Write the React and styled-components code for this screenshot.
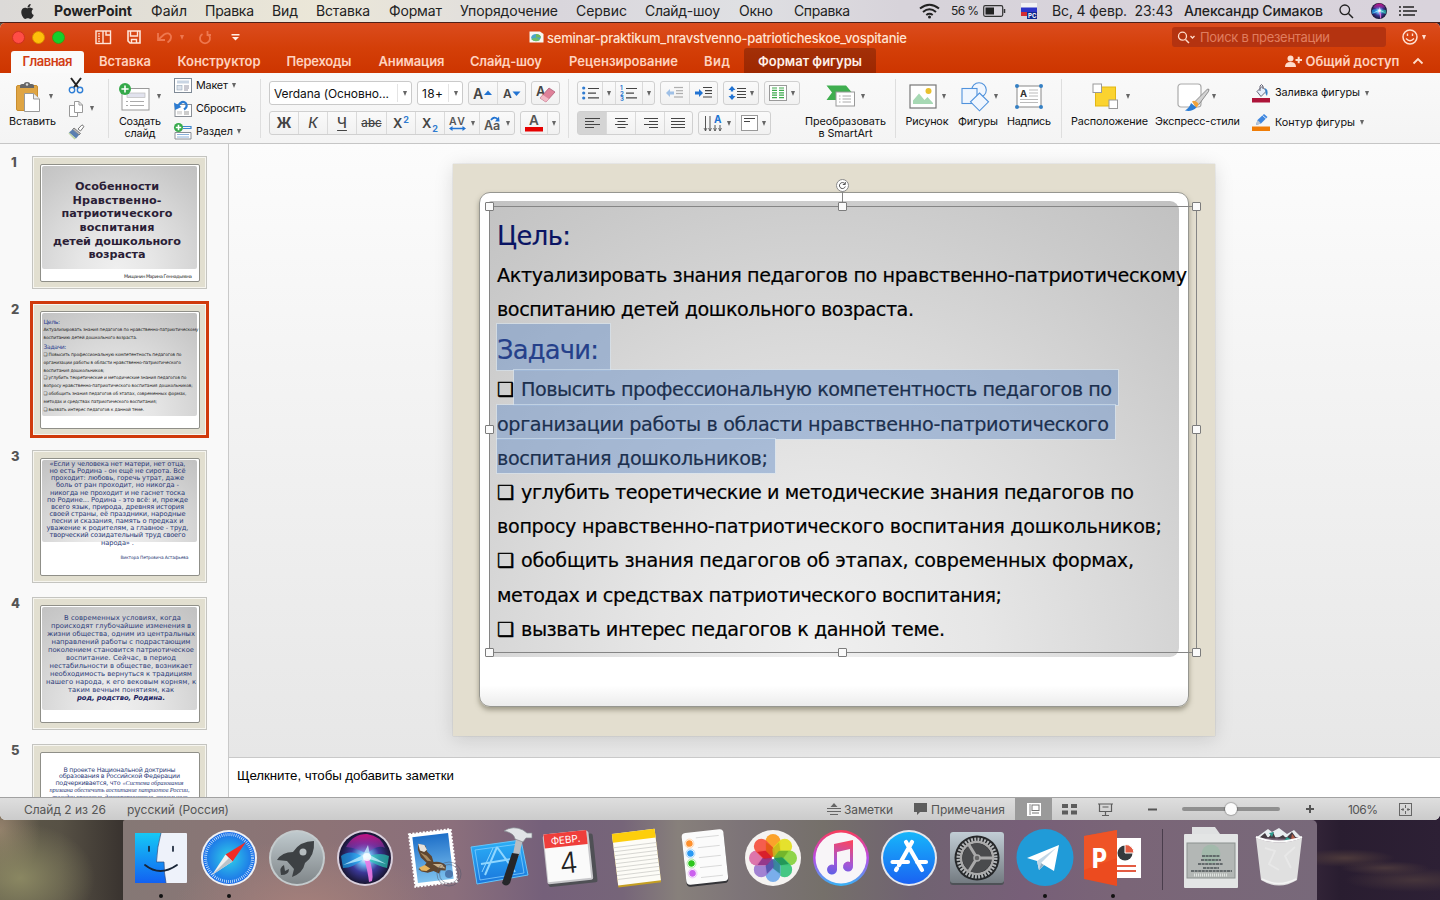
import React, { useLayoutEffect, useRef, useState } from "react";
import styled, { createGlobalStyle, css } from "styled-components";
import { FaApple } from "react-icons/fa";

const Global = createGlobalStyle`
  * { box-sizing: border-box; }
  body { margin: 0; overflow: hidden; font-family: Inter, "Liberation Sans", sans-serif; }
  svg { display: block; flex: none; overflow: visible; }
`;

/* ---------- text fitted to a given width by tracking ---------- */
const FitBox = styled.span`
  display: block;
  flex: none;
  width: ${(p) => p.$w}px;
  margin-left: ${(p) => p.$ml || 0}px;
  white-space: pre;
`;

function Fit({ w, ml, children, className }) {
  const ref = useRef(null);
  const [spacing, setSpacing] = useState(0);
  useLayoutEffect(() => {
    const el = ref.current;
    const count = el.textContent.length;
    el.style.letterSpacing = "0px";
    const natural = el.getBoundingClientRect().width;
    const next = (w - natural) / Math.max(1, count - 1);
    el.style.letterSpacing = `${next}px`;
    setSpacing(next);
  }, [w]);
  return (
    <FitBox className={className} $w={w} $ml={ml}>
      <span ref={ref} style={{ letterSpacing: spacing }}>{children}</span>
    </FitBox>
  );
}

/* ---------- page ---------- */
const Desktop = styled.div`
  width: 1440px;
  height: 900px;
  display: flex;
  flex-direction: column;
  overflow: hidden;
  background:
    radial-gradient(ellipse 75px 55px at 20px 878px, #8a8762 0, #7b785700 100%),
    radial-gradient(ellipse 40px 60px at 0 830px, #94816c 0, #94816c00 100%),
    radial-gradient(ellipse 50px 9px at 1345px 858px, #4d3a3b 0, #4d3a3b00 100%),
    radial-gradient(ellipse 45px 7px at 1385px 868px, #4a383c 0, #4a383c00 100%),
    radial-gradient(ellipse 70px 12px at 1415px 880px, #46353b 0, #46353b00 100%),
    linear-gradient(90deg, #5d5849 0, #575145 60px, #39332f 123px, #38283c 1300px, #291d30 1340px, #2d2035 1440px);
`;

const MenuBar = styled.header`
  height: 23px;
  flex: none;
  display: flex;
  align-items: center;
  border-bottom: 1px solid #4d2018;
  background: linear-gradient(90deg, #dcdad8 0, #e2dfd6 150px, #ebe7d8 320px, #e3e0dc 460px, #d9d6dc 560px, #dfe0e3 740px, #d7d3da 900px, #d9d3dc 1440px);
  color: #222;
  font-size: 14px;
  line-height: 22px;
`;
const MenuText = styled(Fit)`
  font-weight: ${(p) => p.$weight || 400};
  font-size: ${(p) => p.$size || 14}px;
`;
const Gap = styled.span`
  flex: none;
  width: ${(p) => p.$w}px;
`;

const Window = styled.main`
  height: 797px;
  flex: none;
  display: flex;
  flex-direction: column;
  overflow: hidden;
  border-radius: 5px 5px 6px 6px;
  background: #f7f7f7;
`;
const RedHead = styled.div`
  height: 50px;
  flex: none;
  display: flex;
  flex-direction: column;
  background: linear-gradient(#db4c1e 0, #d43f08 50%, #cd3500 100%);
`;
const TitleBar = styled.div`
  height: 25px;
  padding-top: 3px;
  display: flex;
  align-items: center;
`;
const Light = styled.span`
  width: 13px;
  height: 13px;
  margin-left: 7px;
  border-radius: 50%;
  background: ${(p) => p.$c};
  border: 1px solid ${(p) => p.$b};
`;
const TitleText = styled(Fit)`
  font-size: 13px;
  font-weight: 500;
  line-height: 18px;
  padding-top: 2px;
  color: #ffe3d2;
`;
const SearchField = styled.div`
  width: 214px;
  height: 20px;
  margin-left: 265px;
  padding-left: 5px;
  display: flex;
  align-items: center;
  border-radius: 3px;
  background: #b43310;
  color: #e07d5e;
  font-size: 13px;
`;
const Tabs = styled.nav`
  height: 25px;
  display: flex;
  align-items: flex-end;
  font-size: 13px;
  font-weight: 600;
  color: #ffd2bf;
`;
const Tab = styled.div`
  width: ${(p) => p.$w}px;
  height: ${(p) => (p.$kind === "context" ? 25 : 22)}px;
  padding-top: ${(p) => (p.$kind === "context" ? 3 : 0)}px;
  flex: none;
  display: flex;
  justify-content: center;
  line-height: 21px;
  border-radius: 3px 3px 0 0;
  ${(p) => p.$kind === "active" && css`background: #fafafa; color: #d23c14;`}
  ${(p) => p.$kind === "context" && css`background: linear-gradient(#a33008, #9d2700); color: #fff0e8;`}
`;

/* ---------- ribbon ---------- */
const Ribbon = styled.div`
  height: 71px;
  flex: none;
  display: flex;
  background: linear-gradient(#f9f9f9, #f4f4f4);
  border-bottom: 1px solid #c6c6c6;
  color: #111;
  font-size: 10.8px;
`;
const Group = styled.section`
  width: ${(p) => p.$w}px;
  padding: 6px 0 0 ${(p) => p.$pl || 0}px;
  flex: none;
  display: flex;
  position: relative;
  &:not(:last-child)::after {
    content: "";
    position: absolute;
    right: 0;
    top: 6px;
    height: 59px;
    border-right: 1px solid #dedede;
  }
`;
const BigButton = styled.div`
  width: ${(p) => p.$w}px;
  margin-left: ${(p) => p.$ml || 0}px;
  flex: none;
  display: flex;
  flex-direction: column;
  align-items: center;
`;
const BigTop = styled.div`
  height: 35px;
  padding-left: ${(p) => p.$pl || 0}px;
  align-self: flex-start;
  display: flex;
  align-items: center;
  gap: ${(p) => (p.$gap == null ? 5 : p.$gap)}px;
`;
const Label = styled(Fit)`
  line-height: 12px;
  padding-top: ${(p) => p.$pt || 0}px;
`;
const Column = styled.div`
  margin-left: ${(p) => p.$ml || 0}px;
  margin-top: ${(p) => p.$mt || 0}px;
  display: flex;
  flex-direction: column;
  flex: none;
  gap: ${(p) => p.$gap || 0}px;
`;
const SmallRow = styled.div`
  height: ${(p) => p.$h || 23}px;
  flex: none;
  display: flex;
  align-items: center;
  gap: ${(p) => (p.$gap == null ? 4 : p.$gap)}px;
`;
const CaretMark = styled.i`
  width: 0;
  height: 0;
  flex: none;
  border: 2.5px solid transparent;
  border-top: 5px solid ${(p) => p.$c || "#666"};
  border-bottom: 0;
`;
const ToolRow = styled.div`
  height: 24px;
  flex: none;
  display: flex;
  gap: 5px;
`;
const Field = styled.div`
  width: ${(p) => p.$w}px;
  height: 24px;
  display: flex;
  align-items: center;
  border: 1px solid #cacaca;
  border-radius: 3px;
  background: #fff;
  padding-left: 4px;
  font-size: 12px;
`;
const FieldCaret = styled.span`
  margin-left: auto;
  width: 14px;
  height: 18px;
  border-left: 1px solid #e4e4e4;
  display: flex;
  align-items: center;
  justify-content: center;
`;
const Segments = styled.div`
  height: 24px;
  display: flex;
  border: 1px solid #d0d0d0;
  border-radius: 3px;
  background: linear-gradient(#fafafa, #f1f1f1);
`;
const Seg = styled.div`
  width: ${(p) => p.$w}px;
  display: flex;
  align-items: center;
  justify-content: center;
  gap: 4px;
  color: #444;
  font-size: 14px;
  background: ${(p) => (p.$on ? "#d4d4d4" : "transparent")};
  & + & { border-left: 1px solid #dadada; }
`;
const Glyph = styled.span`
  font-size: ${(p) => p.$s || 14}px;
  font-weight: ${(p) => p.$b || 500};
  font-style: ${(p) => (p.$i ? "italic" : "normal")};
  text-decoration: ${(p) => p.$d || "none"};
  text-underline-offset: 2px;
  line-height: 18px;
  sup, sub { font-size: 9px; line-height: 0; color: #2f7bd0; font-weight: 700; margin-left: 1px; }
`;

/* ---------- slide list ---------- */
const Work = styled.div`
  height: 653px;
  flex: none;
  display: flex;
`;
const SlideList = styled.aside`
  width: 229px;
  padding: 12px 0 0 11px;
  overflow: hidden;
  display: flex;
  flex-direction: column;
  gap: 14px;
  border-right: 1px solid #c9c9c9;
  background: #f9f9f9;
`;
const SlideItem = styled.div`
  height: 133px;
  flex: none;
  display: flex;
`;
const SlideNumber = styled.span`
  width: 21px;
  font-size: 13px;
  line-height: 13px;
  font-weight: 800;
  color: #555;
`;
const Thumb = styled.div`
  width: 175px;
  height: 133px;
  padding: 7px 6px 6px 7px;
  border: 1px solid #c4c4c0;
  background: #e2dfd0;
  box-shadow: inset 0 0 0 1px #f6f5ef;
  ${(p) => p.$on && css`outline: 3px solid #d03a0c; outline-offset: -1px; border-color: #fff;`}
`;
const ThumbPaper = styled.div`
  width: 160px;
  height: 118px;
  padding: 1px;
  background: #fff;
  border: 1px solid #8f8f88;
  border-radius: 2px;
  overflow: hidden;
`;
const greyFill = css`
  background:
    radial-gradient(ellipse 68% 108% at 48% 100%, #efefef 0, #e6e6e6 35%, #d8d8d8 68%, #c9c9c9 100%, #bdbdbd 130%);
`;
const ThumbPanel = styled.div`
  width: 155px;
  height: ${(p) => p.$h}px;
  padding-top: ${(p) => p.$pt || 0}px;
  padding-right: ${(p) => p.$pr || 0}px;
  border-radius: 2px;
  display: flex;
  flex-direction: column;
  align-items: ${(p) => (p.$left ? "flex-start" : "center")};
  padding-left: ${(p) => (p.$left ? 1.5 : 0)}px;
  ${(p) => !p.$plain && greyFill}
`;
const ThumbLine = styled(Fit)`
  flex: none;
  height: ${(p) => p.$lh}px;
  line-height: ${(p) => p.$lh}px;
  font-family: ${(p) => (p.$serif ? '"Liberation Serif", serif' : '"DejaVu Sans", sans-serif')};
  font-size: ${(p) => p.$s}px;
  font-weight: ${(p) => (p.$b ? 700 : 400)};
  font-style: ${(p) => (p.$i ? "italic" : "normal")};
  color: ${(p) => p.$c || "#2b3a78"};
`;
const ThumbPair = styled.div`
  display: flex;
  gap: 2px;
`;
const Signature = styled.div`
  display: flex;
  justify-content: flex-end;
  padding-right: ${(p) => p.$r}px;
  padding-top: ${(p) => p.$t}px;
`;

/* ---------- editing area ---------- */
const Editor = styled.div`
  width: 1211px;
  display: flex;
  flex-direction: column;
`;
const Canvas = styled.div`
  height: 613px;
  padding: 20px 0 0 224px;
  background: linear-gradient(#fcfcfc, #f1f1f1 50%, #e7e7e7);
`;
const Slide = styled.div`
  position: relative;
  width: 762px;
  height: 572px;
  padding: 28px 26px;
  background: #e3decf;
  box-shadow: 0 3px 18px rgba(0, 0, 0, 0.13), 0 0 1px rgba(0, 0, 0, 0.25);
`;
const Paper = styled.div`
  width: 710px;
  height: 515px;
  padding: 8px 0 0 9px;
  border: 1px solid #969690;
  border-radius: 11px;
  background: linear-gradient(#fff 96%, #ececec 100%);
  box-shadow: 0 3px 5px rgba(90, 85, 65, 0.5);
`;
const Panel = styled.div`
  width: 690px;
  height: 456px;
  padding: 9px 0 0 8px;
  border-radius: 2px 9px 9px 2px;
  ${greyFill}
`;
const Line = styled.div`
  height: ${(p) => (p.$head ? 46 : 34.2)}px;
  display: flex;
  font-family: "DejaVu Sans", sans-serif;
  font-size: ${(p) => (p.$head ? 25.8 : 19.2)}px;
  line-height: ${(p) => (p.$head ? 53.5 : 40.2)}px;
  color: ${(p) => (p.$head ? "#0a1463" : "#000")};
  -webkit-text-stroke: 0.2px currentColor;
`;
const Bullet = styled.span`
  width: 17px;
  flex: none;
  color: #000;
  -webkit-text-stroke: 0.5px #000;
`;
const Run = styled.span`
  display: flex;
  height: 100%;
  padding: 0 6px 0 ${(p) => (p.$item ? 7 : 0)}px;
  ${(p) => p.$sel && css`
    padding-right: ${p.$pr || 6}px;
    background: rgba(97, 140, 200, 0.45);
    color: ${p.$head ? "#25408a" : "#1c304e"};
    box-shadow: 0 0 0 1px rgba(215, 228, 240, 0.6);
  `}
`;
const Frame = styled.div`
  position: absolute;
  left: 36px;
  top: 42px;
  width: 708px;
  height: 447px;
  border: 1px solid #858585;
`;
const Handle = styled.span`
  position: absolute;
  left: ${(p) => p.$x}px;
  top: ${(p) => p.$y}px;
  width: 9px;
  height: 9px;
  margin: -5px 0 0 -5px;
  border: 1px solid #7c7c7c;
  border-radius: 1px;
  background: #fafafa;
`;
const Rotator = styled.div`
  position: absolute;
  left: 345px;
  top: -29px;
`;
const Notes = styled.div`
  height: 40px;
  padding: 9px 0 0 8px;
  border-top: 1px solid #c9c9c9;
  background: #fff;
  font: 13.3px/18px "Liberation Sans", Arial, sans-serif;
  color: #000;
`;

/* ---------- status bar ---------- */
const StatusBar = styled.footer`
  height: 23px;
  flex: none;
  display: flex;
  align-items: center;
  border-top: 1px solid #a2a2a2;
  background: linear-gradient(#dedede, #cbcbcb);
  color: #555;
  font-size: 12px;
`;
const ViewButton = styled.div`
  width: 37px;
  height: 22px;
  margin-right: -1px;
  display: flex;
  align-items: center;
  justify-content: center;
  background: ${(p) => (p.$on ? "#9a9a9a" : "transparent")};
`;
const Track = styled.div`
  width: 98px;
  height: 4px;
  margin-left: 25px;
  border-radius: 2px;
  background: #8f8f8f;
  display: flex;
  align-items: center;
  justify-content: center;
`;
const Knob = styled.span`
  width: 12px;
  height: 12px;
  border-radius: 50%;
  background: #fcfcfc;
  box-shadow: 0 0 1px 1px rgba(0, 0, 0, 0.2);
`;

/* ---------- dock ---------- */
const Dock = styled.div`
  width: 1194px;
  height: 80px;
  margin-left: 123px;
  padding: 0 4px;
  display: flex;
  border-radius: 2px 5px 0 0;
  background:
    radial-gradient(ellipse 130px 70px at 180px 90px, #a5807b 0, #a5807b00 100%),
    linear-gradient(90deg, #857875 0, #8d7376 200px, #8b6f7c 330px, #75607a 420px, #766579 500px, #87807b 555px, #7d7478 620px, #75706a 700px, #706371 790px, #775f78 900px, #7a6577 1000px, #78697a 1194px);
`;
const Divider = styled.span`
  width: 30px;
  flex: none;
  display: flex;
  justify-content: center;
  &::before { content: ""; width: 1px; height: 61px; margin-top: 9px; background: #4a3d4c; }
`;

/* ---------- drawings ---------- */
const I = ({ w, h, vb, children }) => (
  <svg width={w} height={h} viewBox={vb || `0 0 ${w} ${h}`} fill="none">{children}</svg>
);
const Caret = ({ c }) => <CaretMark $c={c} />;

const PasteIcon = () => (
  <I w={24} h={30}>
    <rect x="0.5" y="3.5" width="21" height="25" rx="1.5" fill="#dfa544" stroke="#c98d2e" />
    <path d="M4 6V3.5Q4 2 6 2H8Q8 0 11 0T14 2H16Q18 2 18 3.5V6Z" fill="#666" />
    <circle cx="11" cy="2.5" r="1.2" fill="#ddd" />
    <path d="M8.500 11.500H17.500L23.500 17V29.500H8.500Z" fill="#fff" stroke="#999" />
    <path d="M17.500 11.500V17H23.500" fill="#eee" stroke="#999" />
  </I>
);
const CutIcon = () => (
  <I w={16} h={17}>
    <path d="M3 1L10.500 11M13 1L5.500 11" stroke="#222" strokeWidth="2" />
    <circle cx="4" cy="13" r="2.700" stroke="#2f7fd6" strokeWidth="1.400" />
    <circle cx="12" cy="13" r="2.700" stroke="#2f7fd6" strokeWidth="1.400" />
  </I>
);
const CopyIcon = () => (
  <I w={16} h={16}>
    <path d="M1.500 4.500H6.500L9.500 7.500V15.500H1.500Z" fill="#fff" stroke="#999" />
    <path d="M6.500 .5H11L14.500 4V11.500H6.500Z" fill="#fff" stroke="#999" />
    <path d="M11 .5V4H14.500" stroke="#999" />
  </I>
);
const BrushIcon = () => (
  <I w={17} h={16}>
    <path d="M10 5L14 .8L16 2.500L12.500 7Z" fill="#fff" stroke="#777" />
    <path d="M6 4L12.500 9.500L11 11L4.500 5.500Z" fill="#bbb" stroke="#666" strokeWidth=".8" />
    <path d="M4.500 5.500L11 11L8 14.500L1 8.500Z" fill="#5b7fb0" />
    <path d="M1 8.500L8 14.500L6.500 15.500L.5 9.500Z" fill="#bcd3a0" />
  </I>
);
const Plus = ({ x, y, r }) => (
  <g>
    <circle cx={x} cy={y} r={r} fill="#35a94a" />
    <path d={`M${x - r * 0.6} ${y}h${r * 1.2}M${x} ${y - r * 0.6}v${r * 1.2}`} stroke="#fff" strokeWidth="1.600" />
  </g>
);
const NewSlideIcon = () => (
  <I w={31} h={28}>
    <rect x="3" y="5.500" width="27" height="21.500" fill="#fff" stroke="#999" />
    <rect x="8" y="10" width="18" height="4.500" fill="#e2e3ee" stroke="#bbb" strokeWidth=".7" />
    <path d="M7 18.500H9M11 18.500H25M7 22.500H9M11 22.500H25" stroke="#aaa" />
    <Plus x={6} y={6} r={6} />
  </I>
);
const LayoutIcon = () => (
  <I w={18} h={15}>
    <rect x=".5" y=".5" width="17" height="14" fill="#fff" stroke="#7f8a96" />
    <rect x="3" y="2.500" width="12" height="3" fill="#c9d5e3" />
    <rect x="3" y="7.500" width="5" height="4.500" fill="#dce3ec" stroke="#9ab" strokeWidth=".6" />
    <path d="M10 8H15M10 10H15M10 12H14" stroke="#889" strokeWidth=".9" />
  </I>
);
const ResetIcon = () => (
  <I w={18} h={17}>
    <rect x="1" y="4.500" width="16.500" height="12" fill="#fff" stroke="#8a8f96" />
    <rect x="3" y="11" width="5" height="3.500" fill="#ddd" />
    <path d="M10 12H15M10 14H15" stroke="#999" />
    <path d="M3.500 7Q8 -1 12 3.500Q14 7 10 9.500" stroke="#2b7cd3" strokeWidth="2.200" />
    <path d="M0 2.500L1 10L7.500 7Z" fill="#2b7cd3" />
  </I>
);
const SectionIcon = () => (
  <I w={18} h={17}>
    <path d="M7 3.500H17V5.500H9" fill="none" stroke="#3f86cf" strokeWidth="1.200" />
    <path d="M1 9.500H17V16H1Z" fill="#fff" stroke="#8a8f96" />
    <path d="M3 11.500H15M3 14H15" stroke="#8ab0da" />
    <Plus x={4.500} y={4.500} r={4.500} />
  </I>
);
const Rows = ({ x = 0, y = 0, ws, gap = 4, c = "#444", right, mid }) => (
  <g stroke={c} strokeWidth="1.200">
    {ws.map((w, i) => {
      const off = right ? right - w : mid ? (mid - w) / 2 : 0;
      return <path key={i} d={`M${x + off} ${y + i * gap + 0.5}h${w}`} />;
    })}
  </g>
);
const BulletListIcon = () => (
  <I w={17} h={14}>
    <g fill="#2f7bd0"><circle cx="1.700" cy="2" r="1.600" /><circle cx="1.700" cy="7" r="1.600" /><circle cx="1.700" cy="12" r="1.600" /></g>
    <Rows x={6} y={2} gap={4.700} ws={[11, 8, 11]} />
  </I>
);
const NumberListIcon = () => (
  <I w={18} h={16}>
    <g fill="#2f7bd0" fontSize="6" fontWeight="700" fontFamily="Inter, sans-serif"><text x="0" y="5">1</text><text x="0" y="10.500">2</text><text x="0" y="16">3</text></g>
    <Rows x={6} y={3} gap={4.700} ws={[11, 8, 11]} />
  </I>
);
const IndentIcon = ({ out }) => (
  <g opacity={out ? 0.4 : 1}>
    <path d={out ? "M0 6L4 2V4.500H8V7.500H4V10Z" : "M8 6L4 2V4.500H0V7.500H4V10Z"} fill="#2173d2" />
    <Rows x={8} y={0} gap={2.700} ws={[9]} />
    <Rows x={10} y={3.200} gap={2.800} ws={[7, 7]} />
    <Rows x={8} y={9.500} ws={[9]} />
  </g>
);
const SpacingIcon = () => (
  <I w={18} h={14}>
    <path d="M4 0L7.500 4H5.200V5.500H2.800V4H.5ZM4 14L7.500 10H5.200V8.500H2.800V10H.5Z" fill="#2173d2" />
    <Rows x={9} y={2} gap={3} ws={[9, 9, 9, 9]} />
  </I>
);
const ColumnsIcon = () => (
  <I w={18} h={16}>
    <rect x=".5" y=".5" width="17" height="15" fill="#fff" stroke="#999" />
    <Rows x={3} y={2.500} gap={2.400} ws={[5, 5, 5, 5, 5]} c="#3caa4c" />
    <Rows x={10} y={2.500} gap={2.400} ws={[5, 5, 5, 5, 5]} c="#3caa4c" />
  </I>
);
const SmartArtIcon = () => (
  <I w={30} h={23}>
    <path d="M.5 .5H20L25.500 7L20 15H.5L6 7.500Z" fill="#3fae4f" />
    <rect x="10" y="7" width="18.500" height="14" fill="#fff" stroke="#999" />
    <path d="M13 11H14.500M16.500 11H25M13 14H14.500M16.500 14H25M13 17H14.500M16.500 17H25" stroke="#aaa" />
  </I>
);
const PictureIcon = () => (
  <I w={28} h={25}>
    <rect x="1" y="1" width="26" height="23" fill="#fff" stroke="#777" strokeWidth="1.200" />
    <path d="M4 20V16.500L10 9.500L15.500 16L18.500 13L24 19V20Z" fill="#a7d9b4" />
    <circle cx="19.500" cy="7" r="3" fill="#e9c02e" />
  </I>
);
const ShapesIcon = () => (
  <I w={28} h={30}>
    <g fill="#f0f6fe" stroke="#5193dc" strokeWidth="1.100">
      <circle cx="18" cy="8" r="7.300" /><rect x="1" y="6.500" width="15" height="15" /><path d="M18.500 11L27.500 19.800L18.500 28.800L9.500 19.800Z" />
    </g>
  </I>
);
const TextBoxIcon = () => (
  <I w={28} h={25}>
    <rect x="2" y="2" width="24" height="21" fill="#fff" stroke="#888" />
    <g fill="#3480c4"><circle cx="2" cy="2" r="2" /><circle cx="26" cy="2" r="2" /><circle cx="2" cy="23" r="2" /><circle cx="26" cy="23" r="2" /></g>
    <text x="5" y="12.500" fontSize="9.500" fontWeight="700" fill="#333" fontFamily="Inter, sans-serif">A</text>
    <path d="M14 6H23M14 9H23M14 12H23M5 15.500H23M5 18.500H23" stroke="#bbb" />
  </I>
);
const ArrangeIcon = () => (
  <I w={27} h={27}>
    <rect x="3.500" y="4" width="20" height="19" fill="#fbd32f" stroke="#e2b714" />
    <rect x="1" y="1" width="8.500" height="8.500" fill="#fff" stroke="#999" /><rect x="17" y="17" width="8.500" height="8.500" fill="#fff" stroke="#999" />
  </I>
);
const StylesIcon = () => (
  <I w={33} h={28}>
    <rect x="1" y="1" width="23" height="23" rx="3" fill="#fff" stroke="#aaa" strokeWidth="1.200" />
    <path d="M30.500 6Q33 5.500 31.500 8.500L21.500 22L17.500 19Z" fill="#d2d2d2" stroke="#777" strokeWidth=".8" />
    <path d="M15 18.500Q18 16.500 21.500 20.500Q21.500 23 19 25Z" fill="#f0a33c" />
    <path d="M8 27.500Q12.500 25 14 20L19.500 24.500Q15 29 8 27.500Z" fill="#2b7cd3" />
  </I>
);
const FillIcon = () => (
  <I w={18} h={19}>
    <path d="M5 7.500L10 2.500L14.500 7L9 12.500Z" fill="#e5eefa" stroke="#667" />
    <path d="M8 7V2Q9.500 -1 11 2V5" stroke="#667" />
    <path d="M12.500 4Q17 5 15 12Q13 10 13.500 7Z" fill="#3480c9" />
    <rect x="0" y="14" width="18" height="4.500" fill="#ad1439" />
  </I>
);
const OutlineIcon = () => (
  <I w={18} h={19}>
    <path d="M4 12L5.500 7L12 1L15.500 4L9 10.500Z" fill="#3e86df" /><path d="M4 12L5.500 7L9 10.500Z" fill="#b8c5d6" />
    <path d="M10.500 2.500L14 5.500" stroke="#fff" strokeWidth=".8" />
    <rect x="0" y="13.500" width="18" height="4.500" fill="#ef7d08" />
  </I>
);

const SiriDisc = ({ id, x, y, r }) => (
  <g>
    <defs>
      <radialGradient id={id} cx=".5" cy=".5" r=".52">
        <stop offset="0" stopColor="#fff" /><stop offset=".25" stopColor="#6fb6f0" /><stop offset=".55" stopColor="#3a3796" /><stop offset="1" stopColor="#151228" />
      </radialGradient>
      <linearGradient id={`${id}Top`} x2="0" y2="1"><stop stopColor="#d8108a" /><stop offset="1" stopColor="#7b3fb8" stopOpacity=".4" /></linearGradient>
    </defs>
    <circle cx={x} cy={y} r={r} fill={`url(#${id})`} />
    <g transform={`translate(${x} ${y}) scale(${r / 26})`}>
      <path d="M-19 -11Q-12 -24 2 -24Q16 -22 20 -10Q12 -14 2 -4Q-8 -10 -19 -11Z" fill={`url(#${id}Top)`} opacity=".9" />
      <path d="M-24 -2Q-14 -10 0 0Q-12 10 -22 10Z" fill="#17a8ee" opacity=".65" />
      <path d="M24 -2Q14 -7 0 0Q12 8 22 10Z" fill="#28cfb4" opacity=".65" />
      <path d="M-1 0L4 0Q9 15 7 23L4 24Q3 14 -1 0Z" fill="#ee7ae6" opacity=".9" />
      <path d="M-22 7L-2 -3L3 -13L5 -3L21 6L4 1L-2 2Z" fill="#c9f4ff" opacity=".75" />
      <circle cx="2" cy="-1" r="4" fill="#fff" opacity=".8" />
    </g>
  </g>
);

const Slot = ({ run, children }) => (
  <I w={68} h={80}>
    {children}
    {run && <circle cx="34" cy="76" r="2" fill="#111" />}
  </I>
);
const range = (n) => Array.from({ length: n }, (_, i) => i);

const Finder = () => (
  <Slot run>
    <defs><linearGradient id="fl" x2="0" y2="1"><stop stopColor="#15c9f5" /><stop offset="1" stopColor="#1261f2" /></linearGradient></defs>
    <rect x="8" y="13" width="52" height="50" rx="1" fill="#eef2fa" />
    <path d="M8 13H34Q30 27 29.500 42H37Q37 53 39 63H8Z" fill="url(#fl)" />
    <path d="M34 13Q30 27 29.500 42H37Q37 53 39 63" stroke="#2d4a80" strokeWidth=".7" />
    <path d="M22 26.500V31M46 26.500V31" stroke="#172436" strokeWidth="1.700" strokeLinecap="round" />
    <path d="M18 45Q33 57 50 45" stroke="#172436" strokeWidth="1.800" strokeLinecap="round" />
  </Slot>
);
const Safari = () => (
  <Slot run>
    <defs><radialGradient id="sf"><stop stopColor="#2fd0e8" /><stop offset="1" stopColor="#1b6ce8" /></radialGradient></defs>
    <circle cx="34" cy="38" r="28" fill="#f0f1f4" /><circle cx="34" cy="38" r="26" fill="url(#sf)" />
    <circle cx="34" cy="38" r="23.500" stroke="#d9efff" strokeWidth="3" strokeDasharray=".7 1.350" />
    <path d="M51 22L37.500 41.500L30.500 34.500Z" fill="#f02c26" /><path d="M17 55L30.500 34.500L37.500 41.500Z" fill="#f0f0f0" /><path d="M17 55L34 38L37.500 41.500Z" fill="#bbc2c8" />
  </Slot>
);
const Launchpad = () => (
  <Slot>
    <defs><linearGradient id="lp" x2="0" y2="1"><stop stopColor="#bfc9cd" /><stop offset="1" stopColor="#808689" /></linearGradient></defs>
    <circle cx="34" cy="38" r="28" fill="#c4cbcd" /><circle cx="34" cy="38" r="26" fill="url(#lp)" />
    <path d="M51 21Q37 21 30 32Q19 32 14 40L24 41L31 49L29 57Q40 53 42 43Q52 36 51 21Z" fill="#3d4144" />
    <circle cx="40" cy="32" r="3.500" fill="#b5bcbf" /><path d="M21 45Q16 47 18 55Q26 55 26 49L22 51Z" fill="#3d4144" />
  </Slot>
);
const Siri = () => (<Slot><circle cx="34" cy="38" r="28" fill="#d9cfdc" /><SiriDisc id="siriDock" x={34} y={38} r={26} /></Slot>);
const Mail = () => (
  <Slot>
    <defs><linearGradient id="ml" x2="0" y2="1"><stop stopColor="#1e6fc8" /><stop offset="1" stopColor="#7ec2ef" /></linearGradient></defs>
    <g transform="rotate(-7 34 38)">
      <rect x="13" y="11.500" width="42" height="53" fill="#fff" stroke="#fff" strokeWidth="2" strokeDasharray="2 1.500" />
      <rect x="16" y="15" width="36" height="46" fill="url(#ml)" />
      <path d="M21 22L28 25L29 31L33 36L34 42Q42 42 46 47L45 52L40 51L38 54L33 51L27 52L21 50L18 47L24 45L27 42L22 36L20 28Z" fill="#5f4630" />
      <path d="M21 22L27 24L29 29L26 31L22 29Z" fill="#e8e2da" />
      <path d="M22 31L28 35L32 41L28 40Z" fill="#a98a60" />
      <path d="M19 46L25 44L30 48L26 50L21 49Z" fill="#e7b45e" />
      <path d="M33 44L42 45L45 50L38 48Z" fill="#c9b18c" />
    </g>
    <g stroke="#4c5669" strokeWidth=".8" opacity=".6"><circle cx="50" cy="54" r="12" /><circle cx="50" cy="54" r="9.500" /></g>
    <circle cx="50" cy="54" r="4" fill="#3a5d94" opacity=".7" />
  </Slot>
);
const Xcode = () => (
  <Slot>
    <defs><linearGradient id="xc" x2="0" y2="1"><stop stopColor="#2bb0f7" /><stop offset="1" stopColor="#1a76dc" /></linearGradient></defs>
    <path d="M4 27L54 20L61 55L10 64Z" fill="url(#xc)" stroke="#64c4fa" />
    <path d="M8 30L52 24L57 53L13 60Z" stroke="#8fd4ff" strokeWidth=".7" />
    <g stroke="#8fd6ff" strokeWidth="2"><path d="M30 27L18 55M30 27L48 52M14 44L50 38" /><path d="M26 28L15 52" strokeWidth="1" /></g>
    <path d="M46 34L50 14L57 15L52 36Z" fill="#b9bdc2" /><path d="M45 33L52 34L43 63Q39 68 35 63Z" fill="#25262a" />
    <path d="M37 11Q46 5 56 10L60 13L65 13L65 18L59 18L56 22L48 19Q47 13 37 11Z" fill="#e1e4e7" stroke="#83888e" strokeWidth=".7" />
  </Slot>
);
const Calendar = () => (
  <Slot>
    <g transform="rotate(-6 34 38)">
      <rect x="11" y="16" width="49" height="49" rx="2" fill="#4f5055" /><rect x="10" y="13" width="46" height="49" rx="2" fill="#c7c7ca" /><rect x="11" y="12" width="43" height="48" fill="#fafafa" /><rect x="11" y="12" width="43" height="14" fill="#ef3e3b" />
      <text x="32.500" y="23" textAnchor="middle" fontSize="10" fontFamily="Inter, sans-serif" fill="#fff">ФЕВР.</text>
      <text x="33" y="53" textAnchor="middle" fontSize="29" fontWeight="300" fontFamily="Inter, sans-serif" fill="#222">4</text>
    </g>
  </Slot>
);
const NotesApp = () => (
  <Slot>
    <g transform="rotate(-7 34 38)">
      <rect x="12" y="13" width="43" height="52" fill="#c59f22" /><rect x="12" y="11" width="43" height="52" fill="#fdfcf7" /><rect x="12" y="11" width="43" height="9" fill="#fdce0c" />
      {range(9).map((i) => <path key={i} d={`M12 ${25 + i * 4}H55`} stroke="#c8c8c4" strokeWidth=".7" />)}
    </g>
  </Slot>
);
const Reminders = () => (
  <Slot>
    <g transform="rotate(-6 34 38)">
      <rect x="13" y="13" width="42" height="52" rx="4" fill="#343438" /><rect x="13" y="11" width="42" height="52" rx="4" fill="#fbfbfb" />
      {["#ff902c", "#2899f4", "#2cc61d", "#cb61ee"].map((c, i) => (
        <g key={c}><circle cx="20" cy={22 + i * 10} r="3.800" fill={c} stroke="#fff" /><circle cx="20" cy={22 + i * 10} r="4.500" stroke={c} strokeWidth=".5" opacity=".6" /><path d={`M28 ${27 + i * 10}H50`} stroke="#ccc" strokeWidth=".7" /></g>
      ))}
      <path d="M27 17H50" stroke="#ccc" strokeWidth=".7" />
    </g>
  </Slot>
);
const PETALS = [
  ["#fb9b1a", "#e0580f"], ["#e3e01c", "#c6b61b"], ["#86d13c", "#6faf2a"], ["#35c37a", "#1f8f53"],
  ["#6fa8ea", "#2f7f93"], ["#9a78cf", "#4a4fa8"], ["#da6aa5", "#8a2f86"], ["#f4503f", "#d41828"],
];
const Photos = () => (
  <Slot>
    <circle cx="34" cy="38" r="28" fill="#f5f3f1" />
    {PETALS.map(([c], i) => (
      <rect key={c} x="26.500" y="14" width="15" height="24" rx="7.500" fill={c} opacity=".92" transform={`rotate(${i * 45} 34 38)`} />
    ))}
    {PETALS.map(([, c], i) => (
      <path key={c} d="M34 38L26.500 32V21.500L34 27Z" fill={c} opacity=".85" transform={`rotate(${i * 45} 34 38) translate(3 3) scale(.91)`} />
    ))}
    <circle cx="34" cy="38" r="1.300" fill="#fff" />
  </Slot>
);
const Music = () => (
  <Slot>
    <defs>
      <linearGradient id="mr" x2="0" y2="1"><stop stopColor="#fb3c58" /><stop offset=".5" stopColor="#b84ae8" /><stop offset="1" stopColor="#35b5f5" /></linearGradient>
      <linearGradient id="mn" gradientUnits="userSpaceOnUse" x1="40" y1="20" x2="30" y2="58"><stop stopColor="#fb445f" /><stop offset=".6" stopColor="#a357d7" /><stop offset="1" stopColor="#5461e9" /></linearGradient>
    </defs>
    <circle cx="34" cy="38" r="28" fill="url(#mr)" /><circle cx="34" cy="38" r="25.500" fill="#f8f5f8" />
    <path d="M27 24L46 20V46A5 5 0 1 1 43 42V29L30 32V50A5 5 0 1 1 27 45Z" fill="url(#mn)" />
  </Slot>
);
const Store = () => (
  <Slot>
    <defs><linearGradient id="as" x2="0" y2="1"><stop stopColor="#17b6fa" /><stop offset="1" stopColor="#1a62f2" /></linearGradient></defs>
    <circle cx="34" cy="38" r="28" fill="#e6e8ed" /><circle cx="34" cy="38" r="26" fill="url(#as)" />
    <g stroke="#fff" strokeWidth="4.200" strokeLinecap="round"><path d="M37 22L24 45M31 22L47 50M17.500 42H33M42 42H51M21 50L22 48.500" /></g>
  </Slot>
);
const Settings = () => (
  <Slot>
    <defs><linearGradient id="st" x2="0" y2="1"><stop stopColor="#c1cdd5" /><stop offset="1" stopColor="#747b81" /></linearGradient></defs>
    <rect x="7" y="12" width="54" height="53" rx="3" fill="#4d5156" /><rect x="7" y="12" width="54" height="51" rx="3" fill="url(#st)" />
    <circle cx="34" cy="38" r="22.500" fill="#26282a" /><circle cx="34" cy="38" r="18.500" stroke="#b4b7b9" strokeWidth="4" strokeDasharray="1.900 1.327" />
    <circle cx="34" cy="38" r="16" stroke="#aaa" strokeWidth="2.500" /><circle cx="34" cy="38" r="14.500" fill="#4a4b4d" />
    <path d="M34 38L26 25M34 38H49M34 38L26 51" stroke="#aaa" strokeWidth="3" /><circle cx="34" cy="38" r="3" fill="#666" stroke="#aaa" strokeWidth="1.500" />
  </Slot>
);
const Telegram = () => (
  <Slot run>
    <circle cx="34" cy="37.500" r="28.500" fill="#209bd8" />
    <path d="M16 38L48 25L43 51L33 45L28 50L26 41Z" fill="#fff" /><path d="M26 41L45 28L30 43L28 50Z" fill="#c3d6e5" /><path d="M30 43L28 50L33 45Z" fill="#93afc4" />
  </Slot>
);
const PowerPoint = () => (
  <Slot run>
    <rect x="34" y="18" width="28" height="40" fill="#fff" />
    <circle cx="46" cy="33" r="7.500" fill="#343a3d" /><path d="M46 33V24.500A8.500 8.500 0 0 1 55 33Z" fill="#e35c43" stroke="#fff" />
    <path d="M38 46H57M38 51H57" stroke="#e35c43" strokeWidth="2" />
    <path d="M5 16L38 10V66L5 59Z" fill="#ec4b1f" /><path d="M5 16L38 10V38L5 50Z" fill="#f25a2b" opacity=".6" />
    <text x="13" y="48" fontSize="27" fontWeight="800" fontFamily="Inter, sans-serif" fill="#fff" textLength="15" lengthAdjust="spacingAndGlyphs">P</text>
  </Slot>
);
const Folder = () => (
  <Slot>
    <path d="M15 14V7H38L43 14Z" fill="#dfe1e2" /><rect x="7" y="14" width="54" height="54" rx="1" fill="#e3e5e5" />
    <rect x="10" y="23" width="48" height="35" fill="#b3b7b5" stroke="#8b918f" />
    <circle cx="34" cy="34" r="9.500" fill="#a3baac" />
    <path d="M25 36H43M24 40H44M21 44H46M26 48H42M14 51H55" stroke="#4b5154" strokeWidth="1.300" strokeDasharray="3 .6" />
    <path d="M17 55H51" stroke="#dfe3e0" strokeWidth="3" strokeDasharray="1 1" />
  </Slot>
);
const Trash = () => (
  <Slot>
    <path d="M12 17L23 9L27 12L34 8L42 14L49 10L56 17Z" fill="#e9eef0" />
    <path d="M14 18L20 13L23 18L28 12L31 19L38 15L41 18L47 12L52 19Z" fill="#453c43" /><path d="M24 13L29 12L27 17ZM42 17L47 20L39 21Z" fill="#2d9c8f" /><path d="M47 14L51 19L46 20Z" fill="#b45e48" />
    <path d="M11 18Q34 27 57 18L52 60Q34 71 16 60Z" fill="#e0e0e0" />
    <path d="M11 17Q34 26 57 17" stroke="#fbfbfb" strokeWidth="2" />
    <path d="M20 28L30 31L24 44L34 50M50 27L40 36L46 48" stroke="#efefef" strokeWidth="2" opacity=".5" />
    <path d="M17 59Q34 68 51 59" stroke="#f3f3f3" strokeWidth="1.500" />
  </Slot>
);

/* ---------- content ---------- */
const MENU = [
  ["Файл", 19, 36], ["Правка", 18, 49], ["Вид", 18, 26], ["Вставка", 18, 54], ["Формат", 19, 53], ["Упорядочение", 18, 98],
  ["Сервис", 18, 51], ["Слайд-шоу", 18, 75], ["Окно", 19, 34], ["Справка", 21, 56],
];
const TABS = [
  ["Главная", 73, 50, "active"], ["Вставка", 82, 52], ["Конструктор", 106, 83], ["Переходы", 94, 65], ["Анимация", 91, 66],
  ["Слайд-шоу", 98, 72], ["Рецензирование", 137, 109], ["Вид", 50, 26],
];
const T1 = [["Особенности", 84], ["Нравственно-", 89], ["патриотического", 111], ["воспитания", 75], ["детей дошкольного", 128], ["возраста", 57]];
const BODY = [
  { t: "Цель:", w: 74, head: 1 },
  { t: "Актуализировать знания педагогов по нравственно-патриотическому", w: 690 },
  { t: "воспитанию детей дошкольного возраста.", w: 417 },
  { t: "Задачи:", w: 102, head: 1, sel: 1, pr: 11 },
  { t: "Повысить профессиональную компетентность педагогов по", w: 591, item: 1, sel: 1 },
  { t: "организации работы в области нравственно-патриотического", w: 612, sel: 1 },
  { t: "воспитания дошкольников;", w: 271, sel: 1, pr: 7 },
  { t: "углубить теоретические и методические знания педагогов по", w: 613, item: 1 },
  { t: "вопросу нравственно-патриотического воспитания дошкольников;", w: 665 },
  { t: "обобщить знания педагогов об этапах, современных формах,", w: 613, item: 1 },
  { t: "методах и средствах патриотического воспитания;", w: 505 },
  { t: "вызвать интерес педагогов к данной теме.", w: 424, item: 1 },
];
const T3 = [
  ["«Если у человека нет матери, нет отца,", 136], ["но есть Родина - он ещё не сирота. Всё", 136], ["проходит: любовь, горечь утрат, даже", 133],
  ["боль от ран проходит, но никогда -", 123], ["никогда не проходит и не гаснет тоска", 135], ["по Родине... Родина - это всё: и, прежде", 141],
  ["всего язык, природа, древняя история", 133], ["своей страны, её праздники, народные", 136], ["песни и сказания, память о предках и", 132],
  ["уважение к родителям, а главное - труд,", 142], ["творческий созидательный труд своего", 136], ["народа» .", 33],
];
const T4 = [
  ["В современных условиях, когда", 117], ["происходят глубочайшие изменения в", 140], ["жизни общества, одним из центральных", 148],
  ["направлений работы с подрастающим", 139], ["поколением становится патриотическое", 146], ["воспитание. Сейчас, в период", 110],
  ["нестабильности в обществе, возникает", 143], ["необходимость вернуться к традициям", 142], ["нашего народа, к его вековым корням, к", 150], ["таким вечным понятиям, как", 106],
];

const Item = ({ n, on, children }) => (
  <SlideItem>
    <SlideNumber>{n}</SlideNumber>
    <Thumb $on={on}><ThumbPaper>{children}</ThumbPaper></Thumb>
  </SlideItem>
);

const HANDLES = [[0, 0], [353, 0], [707, 0], [0, 223], [707, 223], [0, 446], [353, 446], [707, 446]];

export default function App() {
  return (
    <Desktop>
      <Global />
      <MenuBar>
        <Gap $w={19} /><FaApple size={17} color="#2b2b2b" />
        <MenuText ml={18} w={78} $weight={700}>PowerPoint</MenuText>
        {MENU.map(([t, ml, w]) => <MenuText key={t} ml={ml} w={w}>{t}</MenuText>)}
        <Gap $w={69} />
        <I w={21} h={16}>
          <g stroke="#222" strokeWidth="2"><path d="M1 5.500Q10.500 -2 20 5.500M4 9Q10.500 3.500 17 9M7.300 12Q10.500 9.500 13.700 12" /></g><circle cx="10.500" cy="14" r="1.500" fill="#222" />
        </I>
        <MenuText ml={11} w={28} $size={12}>56 %</MenuText>
        <Gap $w={4} />
        <I w={23} h={12}><rect x=".7" y=".7" width="19" height="10.600" rx="1.500" stroke="#333" strokeWidth="1.200" /><rect x="2.500" y="2.500" width="8.500" height="7" fill="#222" /><path d="M21.500 4V8" stroke="#333" strokeWidth="1.500" /></I>
        <Gap $w={15} />
        <I w={16} h={16}>
          <rect y="0" width="16" height="5" fill="#f2f2f4" /><rect y="4.500" width="16" height="4.500" fill="#2c35c8" /><rect y="9" width="16" height="4" fill="#d32d33" /><rect x="6" y="9" width="10" height="7" fill="#10288e" />
          <text x="7" y="15" fontSize="6" fontWeight="700" fill="#fff" fontFamily="Inter, sans-serif">РС</text>
        </I>
        <MenuText ml={15} w={121}>{"Вс, 4 февр.  23:43"}</MenuText>
        <MenuText ml={11} w={139} $weight={500}>Александр Симаков</MenuText>
        <Gap $w={16} />
        <I w={15} h={15}><circle cx="5.800" cy="5.800" r="4.800" stroke="#222" strokeWidth="1.300" /><path d="M9.500 9.500L14 14" stroke="#222" strokeWidth="1.500" /></I>
        <Gap $w={16} />
        <I w={18} h={18}><SiriDisc id="siriMenu" x={9} y={9} r={8} /></I>
        <Gap $w={11} />
        <I w={18} h={12}><path d="M0 2H2M0 6H2M0 10H2M4 2H15M4 6H18M4 10H16" stroke="#222" strokeWidth="1.700" /></I>
      </MenuBar>

      <Window>
        <RedHead>
          <TitleBar>
            <Gap $w={5} /><Light $c="#ff4d47" $b="#cf2f22" /><Light $c="#ffbf0a" $b="#d98d00" /><Light $c="#13d02c" $b="#3f9a10" />
            <Gap $w={30} />
            <I w={17} h={14}><rect x="1" y="1" width="14.500" height="12.500" stroke="#ffe6da" strokeWidth="1.400" /><path d="M8 1V13M11 1V5H15" stroke="#ffe6da" strokeWidth="1.400" /><path d="M4 3V12" stroke="#ffe6da" strokeWidth="1.500" strokeDasharray="1.500 1" /></I>
            <Gap $w={15} />
            <I w={14} h={14}><path d="M1 1H13V13H3L1 11Z" stroke="#ffe6da" strokeWidth="1.600" /><path d="M3.500 1V6H10.500V1M4.500 13V9.500H9.500V13" stroke="#ffe6da" strokeWidth="1.400" /></I>
            <Gap $w={16} />
            <I w={16} h={13}><path d="M1 2V9H8M1.500 8.500L7 3.500Q12 .5 14 5Q14.500 9 10.500 11.500" stroke="#ee774f" strokeWidth="1.800" /></I>
            <Gap $w={7} /><Caret c="#ee774f" /><Gap $w={14} />
            <I w={14} h={14}><path d="M4.500 4A5 5 0 1 0 9.500 4M9.500 1V5H13" stroke="#ee774f" strokeWidth="1.800" /></I>
            <Gap $w={19} />
            <I w={9} h={7}><path d="M.5 .8H8.500" stroke="#fff0e6" strokeWidth="1.400" /><path d="M1 3H8L4.500 6.500Z" fill="#fff0e6" /></I>
            <Gap $w={289} />
            <I w={15} h={12}><path d="M.5 .5H11L14.500 3V11.500H.5Z" fill="#f7f7f2" /><ellipse cx="7" cy="6.500" rx="4.800" ry="3.500" fill="#4aa7c8" /><path d="M7 6.500V3A5 3.500 0 0 1 12 6.500Z" fill="#71b958" /><path d="M2 8Q6 12 11 9L7 6.500Z" fill="#6dbd69" /></I>
            <TitleText ml={3} w={360}>seminar-praktikum_nravstvenno-patrioticheskoe_vospitanie</TitleText>
            <SearchField>
              <I w={19} h={13}><circle cx="5.500" cy="5.200" r="4" stroke="#ffdccb" strokeWidth="1.300" /><path d="M8.500 8.500L12 12" stroke="#ffdccb" strokeWidth="1.500" /><path d="M13.500 5L15.500 7L17.500 5" stroke="#ffdccb" strokeWidth="1.300" /></I>
              <Fit ml={4} w={130}>Поиск в презентации</Fit>
            </SearchField>
            <Gap $w={16} />
            <I w={16} h={16}><circle cx="8" cy="8" r="7" stroke="#ffdfd0" strokeWidth="1.500" /><path d="M5.500 4.500V7M10.500 4.500V7M4 9.500Q8 14 12 9.500" stroke="#ffdfd0" strokeWidth="1.400" /></I>
            <Gap $w={4} /><Caret c="#ffdfd0" />
          </TitleBar>
          <Tabs>
            <Gap $w={11} />
            {TABS.map(([t, w, tw, kind]) => <Tab key={t} $w={w} $kind={kind}><Fit w={tw}>{t}</Fit></Tab>)}
            <Gap $w={2} />
            <Tab $w={132} $kind="context"><Fit w={104}>Формат фигуры</Fit></Tab>
            <Gap $w={403} />
            <Tab $w={150}>
              <SmallRow $h={20}>
                <I w={17} h={13}><circle cx="5.500" cy="3.500" r="3" fill="#ffdccb" /><path d="M0 12Q0 7 5.500 7T11 12Z" fill="#ffdccb" /><path d="M10.500 5H17M13.700 1.800V8.200" stroke="#ffdccb" strokeWidth="2" /></I>
                <Fit w={94}>Общий доступ</Fit><Gap $w={4} />
                <I w={12} h={8}><path d="M1.500 6.500L6 2L10.500 6.500" stroke="#ffdccb" strokeWidth="1.800" /></I>
              </SmallRow>
            </Tab>
          </Tabs>
        </RedHead>

        <Ribbon>
          <Group $w={109} $pl={9}>
            <BigButton $w={47}>
              <BigTop $pl={7} $gap={9}><PasteIcon /><Caret /></BigTop>
              <Label w={47} $pt={2}>Вставить</Label>
            </BigButton>
            <Column $ml={12} $mt={-5}>
              <SmallRow><CutIcon /></SmallRow>
              <SmallRow $gap={6}><CopyIcon /><Caret /></SmallRow>
              <SmallRow><BrushIcon /></SmallRow>
            </Column>
          </Group>
          <Group $w={152} $pl={10}>
            <BigButton $w={42}>
              <BigTop $gap={7}><NewSlideIcon /><Caret /></BigTop>
              <Label w={42} $pt={2}>Создать</Label><Label w={31}>слайд</Label>
            </BigButton>
            <Column $ml={13} $mt={-5}>
              <SmallRow><LayoutIcon /><Label w={32}>Макет</Label><Caret /></SmallRow>
              <SmallRow><ResetIcon /><Label w={50}>Сбросить</Label></SmallRow>
              <SmallRow><SectionIcon /><Label w={37}>Раздел</Label><Caret /></SmallRow>
            </Column>
          </Group>
          <Group $w={308} $pl={8}>
            <Column $gap={6} $mt={2}>
              <ToolRow>
                <Field $w={143}><Fit w={115}>Verdana (Основно...</Fit><FieldCaret><Caret /></FieldCaret></Field>
                <Field $w={46}><Fit w={21}>18+</Fit><FieldCaret><Caret /></FieldCaret></Field>
                <Segments>
                  <Seg $w={28}><I w={20} h={14}><text x="0" y="13" fontSize="14" fontWeight="600" fill="#444" fontFamily="Inter, sans-serif">A</text><path d="M11 9L15 4.500L19 9Z" fill="#2173d2" /></I></Seg>
                  <Seg $w={28}><I w={18} h={14}><text x="0" y="12" fontSize="12" fontWeight="600" fill="#444" fontFamily="Inter, sans-serif">A</text><path d="M9.500 5.500L13.500 10L17.500 5.500Z" fill="#2173d2" /></I></Seg>
                </Segments>
                <Segments><Seg $w={27}><I w={20} h={19}><text x="0" y="12" fontSize="13" fontWeight="600" fill="#444" fontFamily="Inter, sans-serif">A</text><path d="M4 14L13 4L19 8L10 18Z" fill="#df8199" stroke="#a85570" strokeWidth=".7" /><path d="M4 14L7 11L13 15L10 18Z" fill="#f2b8c5" /></I></Seg></Segments>
              </ToolRow>
              <ToolRow>
                <Segments>
                  <Seg $w={28}><Glyph $b={700}>Ж</Glyph></Seg>
                  <Seg $w={29}><Glyph $i>К</Glyph></Seg>
                  <Seg $w={29}><Glyph $d="underline">Ч</Glyph></Seg>
                  <Seg $w={30}><Glyph $s={11.5} $d="line-through">abc</Glyph></Seg>
                  <Seg $w={29}><Glyph $b={600} $s={13}>X<sup>2</sup></Glyph></Seg>
                  <Seg $w={29}><Glyph $b={600} $s={13}>X<sub>2</sub></Glyph></Seg>
                  <Seg $w={35}><I w={18} h={15}><text x="0" y="8.500" fontSize="10.500" fontWeight="600" fill="#555" fontFamily="Inter, sans-serif" textLength="16">AV</text><path d="M2 12.500H15" stroke="#2173d2" strokeWidth="1.300" /><path d="M0 12.500L3.500 10V15ZM17 12.500L13.500 10V15Z" fill="#2173d2" /></I><Caret /></Seg>
                  <Seg $w={35}><I w={18} h={15}><text x="0" y="14" fontSize="12.500" fontWeight="600" fill="#555" fontFamily="Inter, sans-serif">Aa</text><path d="M7 4Q10 0 13.500 3" stroke="#2173d2" strokeWidth="1.800" /><path d="M11 5.500L15.500 5.500L15 .5Z" fill="#2173d2" /></I><Caret /></Seg>
                </Segments>
                <Segments>
                  <Seg $w={26}><I w={18} h={18}><text x="4" y="11" fontSize="13.500" fontWeight="600" fill="#555" fontFamily="Inter, sans-serif">A</text><rect y="13" width="18" height="4.500" fill="#e60000" /></I></Seg>
                  <Seg $w={12}><Caret /></Seg>
                </Segments>
              </ToolRow>
            </Column>
          </Group>
          <Group $w={327} $pl={8}>
            <Column $gap={6} $mt={2}>
              <ToolRow>
                <Segments>
                  <Seg $w={24}><BulletListIcon /></Seg><Seg $w={13}><Caret /></Seg><Seg $w={27}><NumberListIcon /></Seg><Seg $w={12}><Caret /></Seg>
                </Segments>
                <Segments><Seg $w={28}><I w={18} h={12}><IndentIcon out /></I></Seg><Seg $w={28}><I w={18} h={12}><IndentIcon /></I></Seg></Segments>
                <Segments><Seg $w={34}><SpacingIcon /><Caret /></Seg></Segments>
                <Segments><Seg $w={34}><ColumnsIcon /><Caret /></Seg></Segments>
              </ToolRow>
              <ToolRow>
                <Segments>
                  <Seg $w={28} $on><I w={15} h={11}><Rows ws={[15, 9, 15, 9]} gap={3} /></I></Seg>
                  <Seg $w={29}><I w={15} h={11}><Rows ws={[13, 8, 13, 8]} gap={3} mid={15} /></I></Seg>
                  <Seg $w={29}><I w={15} h={11}><Rows ws={[14, 9, 14, 9]} gap={3} right={15} /></I></Seg>
                  <Seg $w={28}><I w={15} h={11}><Rows ws={[14, 14, 14, 14]} gap={3} /></I></Seg>
                </Segments>
                <Segments>
                  <Seg $w={36}><I w={19} h={17}><path d="M1.500 1V16M6 1V16M11 10V16M16 10V16" stroke="#555" /><path d="M0 13L1.500 16L3 13M4.500 13L6 16L7.500 13M9.500 13L11 16L12.500 13M14.500 13L16 16L17.500 13" stroke="#555" strokeWidth=".8" /><text x="10" y="8" fontSize="10" fontWeight="700" fill="#2173d2" fontFamily="Inter, sans-serif">A</text></I><Caret /></Seg>
                  <Seg $w={35}><I w={17} h={16}><rect x=".5" y=".5" width="16" height="15" fill="#fff" stroke="#999" /><Rows x={3} y={3} gap={3} ws={[11, 6]} /></I><Caret /></Seg>
                </Segments>
              </ToolRow>
            </Column>
            <BigButton $w={81} $ml={5}>
              <BigTop $pl={21}><SmartArtIcon /><Caret /></BigTop>
              <Label w={81} $pt={2}>Преобразовать</Label><Label w={54}>в SmartArt</Label>
            </BigButton>
          </Group>
          <Group $w={166} $pl={9}>
            <BigButton $w={44}><BigTop $pl={4}><PictureIcon /><Caret /></BigTop><Label w={43} $pt={2}>Рисунок</Label></BigButton>
            <BigButton $w={40} $ml={9}><BigTop $pl={3}><ShapesIcon /><Caret /></BigTop><Label w={40} $pt={2}>Фигуры</Label></BigButton>
            <BigButton $w={44} $ml={9}><BigTop $pl={8}><TextBoxIcon /></BigTop><Label w={44} $pt={2}>Надпись</Label></BigButton>
          </Group>
          <Group $w={379} $pl={9}>
            <BigButton $w={77}><BigTop $pl={21} $gap={7}><ArrangeIcon /><Caret /></BigTop><Label w={77} $pt={2}>Расположение</Label></BigButton>
            <BigButton $w={85} $ml={7}><BigTop $pl={22} $gap={2}><StylesIcon /><Caret /></BigTop><Label w={85} $pt={2}>Экспресс-стили</Label></BigButton>
            <Column $ml={12}>
              <SmallRow $h={28} $gap={5}><FillIcon /><Label w={85}>Заливка фигуры</Label><Caret /></SmallRow>
              <SmallRow $h={31} $gap={5}><OutlineIcon /><Label w={80}>Контур фигуры</Label><Caret /></SmallRow>
            </Column>
          </Group>
        </Ribbon>

        <Work>
          <SlideList>
            <Item n={1}>
              <ThumbPanel $h={103} $pt={14} $pr={5}>{T1.map(([t, w]) => <ThumbLine key={t} w={w} $lh={13.65} $s={11.2} $b $c="#2b1e36">{t}</ThumbLine>)}</ThumbPanel>
              <Signature $t={4} $r={6}><ThumbLine w={68} $lh={7} $s={4.7} $c="#222">Мищанин Марина Геннадьевна</ThumbLine></Signature>
            </Item>
            <Item n={2} on>
              <ThumbPanel $h={103} $pt={4} $left>
                {BODY.map((l) => (
                  <ThumbLine key={l.t} w={(l.w + (l.item ? 24 : 0)) * 0.2245} $lh={l.head ? 9 : 7.9} $s={l.head ? 6 : 4.4} $c={l.head ? "#2b4090" : "#222"}>
                    {(l.item ? "❑ " : "") + l.t}
                  </ThumbLine>
                ))}
              </ThumbPanel>
            </Item>
            <Item n={3}>
              <ThumbPanel $h={82} $pr={4} $pt={1}>
                {T3.map(([t, w]) => <ThumbLine key={t} w={w} $lh={7.15} $s={6.7}>{t}</ThumbLine>)}
                <Signature $t={7} $r={0}><ThumbLine w={68} ml={74} $lh={7} $s={4.4}>Виктора Петровича Астафьева</ThumbLine></Signature>
              </ThumbPanel>
            </Item>
            <Item n={4}>
              <ThumbPanel $h={103} $pt={8}>
                {T4.map(([t, w], i) => <ThumbLine key={t} ml={i === 0 ? 6 : 3} w={w} $lh={i === 0 ? 7.3 : 8.03} $s={6.8}>{t}</ThumbLine>)}
                <ThumbLine w={88} ml={3} $lh={8.03} $s={6.8} $b $i $c="#1d2460">род, родство, Родина.</ThumbLine>
              </ThumbPanel>
            </Item>
            <Item n={5}>
              <ThumbPanel $h={103} $pt={12.5} $plain>
                <ThumbLine w={112} $lh={6.9} $s={6.3}>В проекте Национальной доктрины</ThumbLine>
                <ThumbLine w={121} $lh={6.9} $s={6.3}>образования в Российской Федерации</ThumbLine>
                <ThumbPair><ThumbLine w={65} $lh={6.9} $s={6.3}>подчеркивается, что</ThumbLine><ThumbLine w={61} $lh={6.9} $s={6.3} $i $serif>«Система образования</ThumbLine></ThumbPair>
                <ThumbLine w={140} $lh={6.9} $s={6.3} $i $serif>призвана обеспечить воспитание патриотов России,</ThumbLine>
                <ThumbLine w={136} $lh={6.9} $s={6.3} $i $serif>граждан правового, демократического, социального</ThumbLine>
              </ThumbPanel>
            </Item>
          </SlideList>
          <Editor>
            <Canvas>
              <Slide>
                <Paper>
                  <Panel>
                    {BODY.map((l) => (
                      <Line key={l.t} $head={l.head}>
                        {l.item && <Bullet>❑</Bullet>}
                        <Run $sel={l.sel} $head={l.head} $item={l.item} $pr={l.pr}><Fit w={l.w}>{l.t}</Fit></Run>
                      </Line>
                    ))}
                  </Panel>
                </Paper>
                <Frame>
                  {HANDLES.map(([x, y]) => <Handle key={`${x}-${y}`} $x={x} $y={y} />)}
                  <Rotator>
                    <I w={14} h={24}><path d="M7.500 13V24" stroke="#858585" /><circle cx="7.500" cy="7.500" r="6" fill="#fff" stroke="#8a8a8a" /><path d="M9.800 5.700A3 3 0 1 0 10.300 8.500M10.300 4V6.500H7.800" stroke="#555" /></I>
                  </Rotator>
                </Frame>
              </Slide>
            </Canvas>
            <Notes><Fit w={217}>Щелкните, чтобы добавить заметки</Fit></Notes>
          </Editor>
        </Work>

        <StatusBar>
          <Fit ml={24} w={82}>Слайд 2 из 26</Fit>
          <Fit ml={21} w={102}>русский (Россия)</Fit>
          <Gap $w={598} />
          <I w={14} h={13}><path d="M3.500 4H10.500L7 0Z" fill="#666" /><path d="M0 5.500H14M0 8.500H14M3 11.500H11" stroke="#666" strokeWidth="1.200" /></I>
          <Fit ml={3} w={49}>Заметки</Fit>
          <Gap $w={21} />
          <I w={13} h={12}><path d="M0 0H13V9H6L3 12V9H0Z" fill="#5d5d5d" /></I>
          <Fit ml={4} w={74}>Примечания</Fit>
          <Gap $w={10} />
          <ViewButton $on><I w={14} h={13}><rect width="14" height="13" fill="#fff" /><path d="M3 1V12" stroke="#888" /><rect x="5" y="2" width="7" height="5.500" stroke="#777" /><path d="M5 10H12" stroke="#777" /></I></ViewButton>
          <ViewButton><I w={15} h={12}><path d="M0 1H6V5H0ZM9 1H15V5H9ZM0 7.500H6V11.500H0ZM9 7.500H15V11.500H9Z" fill="#5d5d5d" /></I></ViewButton>
          <ViewButton><I w={15} h={13}><path d="M0 1H15M1.500 1V8.500H13.500V1M4.500 4H10.500M7.500 8.500V12M4 12.500H11" stroke="#5d5d5d" strokeWidth="1.200" /></I></ViewButton>
          <Gap $w={25} />
          <I w={9} h={9}><path d="M0 4.500H9" stroke="#555" strokeWidth="2" /></I>
          <Track><Knob /></Track>
          <Gap $w={26} />
          <I w={8} h={8}><path d="M0 4H8M4 0V8" stroke="#555" strokeWidth="2" /></I>
          <Fit ml={34} w={30}>106%</Fit>
          <Gap $w={21} />
          <I w={13} h={13}><rect x=".5" y=".5" width="12" height="12" stroke="#666" /><path d="M6.500 2V5M6.500 8V11M2 6.500H5M8 6.500H11M4 5V8M9 5V8" stroke="#666" /></I>
        </StatusBar>
      </Window>

      <Dock>
        <Finder /><Safari /><Launchpad /><Siri /><Mail /><Xcode /><Calendar /><NotesApp /><Reminders /><Photos /><Music /><Store /><Settings /><Telegram /><PowerPoint />
        <Divider />
        <Folder /><Trash />
      </Dock>
    </Desktop>
  );
}
